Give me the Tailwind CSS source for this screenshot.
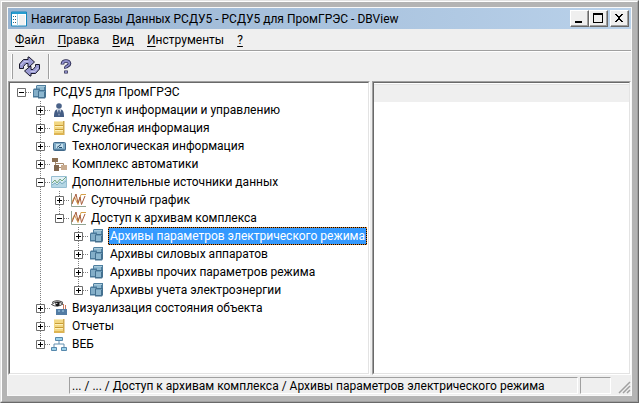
<!DOCTYPE html>
<html lang="ru">
<head>
<meta charset="utf-8">
<meta name="viewport" content="width=device-width, initial-scale=1">
<title>Навигатор Базы Данных РСДУ5</title>
<script src="https://cdn.jsdelivr.net/npm/@tailwindcss/browser@4"></script>
</head>
<body class="flex min-h-screen cursor-default flex-col border border-[#696969] border-t-[#e3e3e3] border-l-[#e3e3e3] bg-[#b4b4b4] font-['Roboto','Noto_Sans',sans-serif] text-[12px] leading-[18px] text-black">
<svg class="hidden" aria-hidden="true">
  <symbol id="db" viewBox="0 0 16 16">
    <path d="M4 2l1-1h9v7l-1 1H4z" fill="#4f7f9f"/>
    <path d="M5 3h7v5H5z" fill="#8fb9d0"/><path d="M5 2h8v1H5z" fill="#a9cadb"/>
    <path d="M1 5.500l1-1h6v9H1z" fill="#4b7a9b"/>
    <path d="M2 6h5v6H2z" fill="#83aec8"/>
    <path d="M6 7l1-1h7v7l-1 1.500H6z" fill="#44708f"/>
    <path d="M7 8h5v5H7z" fill="#8db7cf"/><path d="M7 7h6v1H7z" fill="#6a9ab8"/>
  </symbol>
  <symbol id="person" viewBox="0 0 16 16">
    <circle cx="8" cy="4" r="2.800" fill="#4a6288"/>
    <path d="M3 15c0-4 .5-7 3-7.500h4c2.500.5 3 3.500 3 7.500z" fill="#445d84"/>
    <path d="M5.800 7.500h4.400L8 14z" fill="#e8eef6"/><path d="M7.300 8h1.400l.5 3.500L8 13l-1.200-1.500z" fill="#536b91"/>
  </symbol>
  <symbol id="book" viewBox="0 0 16 16">
    <path d="M3 1h10v14H3z" fill="#f2d782"/><path d="M12 1h1.500v14H12z" fill="#d0a94e"/>
    <path d="M3 1h9v1H3z" fill="#f9eab4"/><path d="M4 5h8v1H4zM4 9h8v1H4z" fill="#c89d36"/>
    <path d="M4 6h8v1H4zM4 10h8v1H4z" fill="#fff2bd"/><path d="M3 13h10v2H3z" fill="#ddb452"/>
  </symbol>
  <symbol id="meter" viewBox="0 0 16 16">
    <rect x="2.500" y="4.500" width="12" height="8" rx="1" fill="#7fabc6" stroke="#41698a"/>
    <path d="M5 6h7v4H5z" fill="#c5dfed"/><path d="M6 9.500l4-3M8 9.500h3" stroke="#244d6e" fill="none"/><path d="M3 11h11v1H3z" fill="#55809f"/>
  </symbol>
  <symbol id="blocks" viewBox="0 0 16 16">
    <path d="M4.500 5v8M4.500 11.500H10M5 7.500h7.500V10" stroke="#a68b6e" fill="none"/>
    <path d="M1 2h6v4H1z" fill="#8b7053"/><path d="M3 9h5v6H3z" fill="#80674e"/><path d="M10 9h6v5h-6z" fill="#c8ab8f"/>
  </symbol>
  <symbol id="wave" viewBox="0 0 16 16">
    <path d="M.5 2.500h15v11H.5z" fill="#e2f0f6" stroke="#96bed2"/>
    <path d="M1 11 4 8l2 3 3-5 2 3 4-5v9H1z" fill="#b4d6e4"/>
    <path d="m1 9 3-3 2 3 3-4 2 2 4-4" fill="none" stroke="#71a67c"/><path d="m1 11 3-2 2 2 3-3 2 2 4-3" fill="none" stroke="#7fb0c2"/>
  </symbol>
  <symbol id="graph" viewBox="0 0 16 16">
    <path d="M1.500 1v13.500H16" fill="none" stroke="#93a593"/><path d="m2 10 2.500-5L8 12.500 11 2.500h5" fill="none" stroke="#d6a14b"/>
    <path d="m2 12 4-10L8 11l2-6 1.500 7.500L15 4" fill="none" stroke="#a75d3c"/>
  </symbol>
  <symbol id="eye" viewBox="0 0 16 16">
    <path d="M5 9h11v6H5z" fill="#537ca4"/><path d="M7 10h2v2H7zm4 0h2v2h-2z" fill="#7ea8c8"/><path d="M12.500 4v5M14.500 5v4" stroke="#c87a60"/>
    <path d="M.5 4.500Q6 0 12 4 6 8 .5 4.500z" fill="#fff" stroke="#454545"/><path d="M1 2.500Q6-1 12 2.500" stroke="#333" fill="none"/><circle cx="6.500" cy="4" r="2.200" fill="#161616"/><circle cx="5.800" cy="3.400" r=".6" fill="#fff"/>
  </symbol>
  <symbol id="net" viewBox="0 0 16 16">
    <path d="M8 5v3M3 11V8h10v3" stroke="#628faf" fill="none"/>
    <path d="M4.500 1.500h7v3h-7zM.5 11.500h5v3h-5zM10.500 11.500h5v3h-5z" fill="#9bd1ea" stroke="#5688ac"/>
  </symbol>
  <symbol id="plus" viewBox="0 0 9 9"><path d="M.5.500h8v8h-8z" fill="#fff" stroke="#6e6e6e"/><path d="M2 4h5v1H2zM4 2h1v5H4z"/></symbol>
  <symbol id="minus" viewBox="0 0 9 9"><path d="M.5.500h8v8h-8z" fill="#fff" stroke="#6e6e6e"/><path d="M2 4h5v1H2z"/></symbol>
</svg>

<div class="flex flex-1 flex-col border border-[#a0a0a0] border-t-white border-l-white p-[5px]">
<div class="flex flex-1 flex-col border border-[#f8f8f8] bg-[#efefef]">
  <header class="flex h-[21px] items-center bg-gradient-to-r from-[#99b4d1] to-[#b9d1ea] pr-[2px] pl-[3px]">
    <svg class="mr-1 h-4 w-4 shrink-0" viewBox="0 0 16 16" aria-hidden="true"><path d="M.5 1h15v14H.5z" fill="#fff" stroke="#1687bd"/><path d="M1 1h14v2H1z" fill="#269bce"/><path d="M6 3h1v12H6z" fill="#a8d3e7"/><path d="M2 5h1v1H2zm0 3h1v1H2zm0 3h1v1H2z" fill="#197ba9"/><path d="M4 5h1v1H4zm0 3h1v1H4zm0 3h1v1H4z" fill="#555"/><path d="M8 4h6v10H8z" fill="#f1f1f1"/></svg>
    <h1 class="flex-1 whitespace-nowrap">Навигатор Базы Данных РСДУ5 - РСДУ5 для ПромГРЭС - DBView</h1>
    <button aria-label="Свернуть" class="h-[17px] w-[19px] border border-[#696969] border-t-white border-l-white bg-[#efefef] shadow-[inset_-1px_-1px_#a0a0a0]"><svg class="h-[15px] w-[17px]" viewBox="0 0 17 15"><path d="M4 10h7v2H4z"/></svg></button>
    <button aria-label="Развернуть" class="h-[17px] w-[19px] border border-[#696969] border-t-white border-l-white bg-[#efefef] shadow-[inset_-1px_-1px_#a0a0a0]"><svg class="h-[15px] w-[17px]" viewBox="0 0 17 15"><path fill-rule="evenodd" d="M3 2h10v10H3zM4 4v7h8V4z"/></svg></button>
    <button aria-label="Закрыть" class="ml-[2px] h-[17px] w-[19px] border border-[#696969] border-t-white border-l-white bg-[#efefef] shadow-[inset_-1px_-1px_#a0a0a0]"><svg class="h-[15px] w-[17px]" viewBox="0 0 17 15"><path d="M4 3h2v1h1v1h2V4h1V3h2v1h-1v1h-1v1H9v2h1v1h1v1h1v1h-2v-1H9V9H7v1H6v1H4v-1h1V9h1V8h1V6H6V5H5V4H4z"/></svg></button>
  </header>
  <nav aria-label="Меню" class="flex h-[22px] items-center gap-[13px] border-b border-[#a0a0a0] pl-[7px]">
    <button><u class="underline-offset-2">Ф</u>айл</button>
    <button><u class="underline-offset-2">П</u>равка</button>
    <button><u class="underline-offset-2">В</u>ид</button>
    <button><u class="underline-offset-2">И</u>нструменты</button>
    <button><u class="underline-offset-2">?</u></button>
  </nav>
  <div role="toolbar" aria-label="Панель инструментов" class="flex h-[30px] items-center border-t border-white pl-[3px]">
    <div class="h-[25px] w-[2px] border-r border-[#a0a0a0] bg-white"></div>
    <button aria-label="Обновить" class="ml-[5px] h-[24px] w-[24px]"><svg class="h-6 w-6" viewBox="0 0 24 24" fill="#9a9ad2" stroke="#17172b" stroke-linejoin="miter"><path d="M1.500 13.500V9l4-4.500H10V2h1L16.500 7 11 12h-1V8.500H8L5.500 11.500v2z"/><path d="M21.500 9.500V14l-4 4.500H13V21h-1L6.500 16 12 11.500h1V14.500h2L17.500 11.500v-2z"/><path d="M3 10 6 6.500H10.500M20 13l-3 3.500H12.500" stroke="#c6c6ec" fill="none"/></svg></button>
    <div class="ml-[6px] h-[25px] w-[2px] border-l border-[#a0a0a0] bg-white"></div>
    <button aria-label="Справка" class="ml-[8px] h-4 w-4"><svg class="h-4 w-4" viewBox="0 0 16 16" fill="none"><path d="M4.500 5.500V4.500Q5 2 8 2t3.500 2.500q0 1.500-2 2.500T8 9.500M8 11.500v3" stroke="#28284f" stroke-width="3.600"/><path d="M4.500 5v-.5Q5 2 8 2t3.500 2.500q0 1.500-2 2.500T8 9M8 12v2" stroke="#8c8cc8" stroke-width="1.800"/></svg></button>
  </div>

  <main class="flex flex-1 gap-[2px]">
    <section aria-label="Дерево объектов" class="flex min-w-0 flex-[362] border border-white border-t-[#a0a0a0] border-l-[#a0a0a0]">
      <div class="min-w-0 flex-1 border border-[#e3e3e3] border-t-[#696969] border-l-[#696969] bg-white pl-[7px] whitespace-nowrap">
        <div class="flex h-[18px] items-center"><button aria-label="Свернуть ветвь" class="h-[9px] w-[9px]"><svg class="h-[9px] w-[9px]"><use href="#minus"/></svg></button><i class="h-px w-[6px] bg-[repeating-linear-gradient(90deg,#808080_0_1px,transparent_1px_2px)]"></i><svg class="mr-[5px] h-4 w-4 shrink-0"><use href="#db"/></svg><span>РСДУ5 для ПромГРЭС</span></div>
        <ul class="pl-[19px]">
          <li class="flex h-[18px] items-center"><span class="flex h-full items-center bg-[repeating-linear-gradient(#808080_0_1px,transparent_1px_2px)] bg-[length:1px_100%] bg-[position:4px_0] bg-no-repeat"><button aria-label="Развернуть ветвь" class="h-[9px] w-[9px]"><svg class="h-[9px] w-[9px]"><use href="#plus"/></svg></button></span><i class="h-px w-[6px] bg-[repeating-linear-gradient(90deg,#808080_0_1px,transparent_1px_2px)]"></i><svg class="mr-[5px] h-4 w-4 shrink-0"><use href="#person"/></svg><span>Доступ к информации и управлению</span></li>
          <li class="flex h-[18px] items-center"><span class="flex h-full items-center bg-[repeating-linear-gradient(#808080_0_1px,transparent_1px_2px)] bg-[length:1px_100%] bg-[position:4px_0] bg-no-repeat"><button aria-label="Развернуть ветвь" class="h-[9px] w-[9px]"><svg class="h-[9px] w-[9px]"><use href="#plus"/></svg></button></span><i class="h-px w-[6px] bg-[repeating-linear-gradient(90deg,#808080_0_1px,transparent_1px_2px)]"></i><svg class="mr-[5px] h-4 w-4 shrink-0"><use href="#book"/></svg><span>Служебная информация</span></li>
          <li class="flex h-[18px] items-center"><span class="flex h-full items-center bg-[repeating-linear-gradient(#808080_0_1px,transparent_1px_2px)] bg-[length:1px_100%] bg-[position:4px_0] bg-no-repeat"><button aria-label="Развернуть ветвь" class="h-[9px] w-[9px]"><svg class="h-[9px] w-[9px]"><use href="#plus"/></svg></button></span><i class="h-px w-[6px] bg-[repeating-linear-gradient(90deg,#808080_0_1px,transparent_1px_2px)]"></i><svg class="mr-[5px] h-4 w-4 shrink-0"><use href="#meter"/></svg><span>Технологическая информация</span></li>
          <li class="flex h-[18px] items-center"><span class="flex h-full items-center bg-[repeating-linear-gradient(#808080_0_1px,transparent_1px_2px)] bg-[length:1px_100%] bg-[position:4px_0] bg-no-repeat"><button aria-label="Развернуть ветвь" class="h-[9px] w-[9px]"><svg class="h-[9px] w-[9px]"><use href="#plus"/></svg></button></span><i class="h-px w-[6px] bg-[repeating-linear-gradient(90deg,#808080_0_1px,transparent_1px_2px)]"></i><svg class="mr-[5px] h-4 w-4 shrink-0"><use href="#blocks"/></svg><span>Комплекс автоматики</span></li>
          <li class="bg-[repeating-linear-gradient(#808080_0_1px,transparent_1px_2px)] bg-[length:1px_100%] bg-[position:4px_0] bg-no-repeat">
            <div class="flex h-[18px] items-center"><button aria-label="Свернуть ветвь" class="h-[9px] w-[9px]"><svg class="h-[9px] w-[9px]"><use href="#minus"/></svg></button><i class="h-px w-[6px] bg-[repeating-linear-gradient(90deg,#808080_0_1px,transparent_1px_2px)]"></i><svg class="mr-[5px] h-4 w-4 shrink-0"><use href="#wave"/></svg><span>Дополнительные источники данных</span></div>
            <ul class="pl-[19px]">
              <li class="flex h-[18px] items-center"><span class="flex h-full items-center bg-[repeating-linear-gradient(#808080_0_1px,transparent_1px_2px)] bg-[length:1px_100%] bg-[position:4px_0] bg-no-repeat"><button aria-label="Развернуть ветвь" class="h-[9px] w-[9px]"><svg class="h-[9px] w-[9px]"><use href="#plus"/></svg></button></span><i class="h-px w-[6px] bg-[repeating-linear-gradient(90deg,#808080_0_1px,transparent_1px_2px)]"></i><svg class="mr-[5px] h-4 w-4 shrink-0"><use href="#graph"/></svg><span>Суточный график</span></li>
              <li>
                <div class="flex h-[18px] items-center"><span class="flex h-full items-center bg-[repeating-linear-gradient(#808080_0_1px,transparent_1px_2px)] bg-[length:1px_9px] bg-[position:4px_0] bg-no-repeat"><button aria-label="Свернуть ветвь" class="h-[9px] w-[9px]"><svg class="h-[9px] w-[9px]"><use href="#minus"/></svg></button></span><i class="h-px w-[6px] bg-[repeating-linear-gradient(90deg,#808080_0_1px,transparent_1px_2px)]"></i><svg class="mr-[5px] h-4 w-4 shrink-0"><use href="#graph"/></svg><span>Доступ к архивам комплекса</span></div>
                <ul class="pl-[19px]">
                  <li class="flex h-[18px] items-center"><span class="flex h-full items-center bg-[repeating-linear-gradient(#808080_0_1px,transparent_1px_2px)] bg-[length:1px_100%] bg-[position:4px_0] bg-no-repeat"><button aria-label="Развернуть ветвь" class="h-[9px] w-[9px]"><svg class="h-[9px] w-[9px]"><use href="#plus"/></svg></button></span><i class="h-px w-[6px] bg-[repeating-linear-gradient(90deg,#808080_0_1px,transparent_1px_2px)]"></i><svg class="mr-[3px] h-4 w-4 shrink-0"><use href="#db"/></svg><span aria-selected="true" class="border border-dotted border-[#d9822b] bg-black"><span class="block bg-[#3399ff] px-px leading-[16px] text-white">Архивы параметров электрического режима</span></span></li>
                  <li class="flex h-[18px] items-center"><span class="flex h-full items-center bg-[repeating-linear-gradient(#808080_0_1px,transparent_1px_2px)] bg-[length:1px_100%] bg-[position:4px_0] bg-no-repeat"><button aria-label="Развернуть ветвь" class="h-[9px] w-[9px]"><svg class="h-[9px] w-[9px]"><use href="#plus"/></svg></button></span><i class="h-px w-[6px] bg-[repeating-linear-gradient(90deg,#808080_0_1px,transparent_1px_2px)]"></i><svg class="mr-[5px] h-4 w-4 shrink-0"><use href="#db"/></svg><span>Архивы силовых аппаратов</span></li>
                  <li class="flex h-[18px] items-center"><span class="flex h-full items-center bg-[repeating-linear-gradient(#808080_0_1px,transparent_1px_2px)] bg-[length:1px_100%] bg-[position:4px_0] bg-no-repeat"><button aria-label="Развернуть ветвь" class="h-[9px] w-[9px]"><svg class="h-[9px] w-[9px]"><use href="#plus"/></svg></button></span><i class="h-px w-[6px] bg-[repeating-linear-gradient(90deg,#808080_0_1px,transparent_1px_2px)]"></i><svg class="mr-[5px] h-4 w-4 shrink-0"><use href="#db"/></svg><span>Архивы прочих параметров режима</span></li>
                  <li class="flex h-[18px] items-center"><span class="flex h-full items-center bg-[repeating-linear-gradient(#808080_0_1px,transparent_1px_2px)] bg-[length:1px_9px] bg-[position:4px_0] bg-no-repeat"><button aria-label="Развернуть ветвь" class="h-[9px] w-[9px]"><svg class="h-[9px] w-[9px]"><use href="#plus"/></svg></button></span><i class="h-px w-[6px] bg-[repeating-linear-gradient(90deg,#808080_0_1px,transparent_1px_2px)]"></i><svg class="mr-[5px] h-4 w-4 shrink-0"><use href="#db"/></svg><span>Архивы учета электроэнергии</span></li>
                </ul>
              </li>
            </ul>
          </li>
          <li class="flex h-[18px] items-center"><span class="flex h-full items-center bg-[repeating-linear-gradient(#808080_0_1px,transparent_1px_2px)] bg-[length:1px_100%] bg-[position:4px_0] bg-no-repeat"><button aria-label="Развернуть ветвь" class="h-[9px] w-[9px]"><svg class="h-[9px] w-[9px]"><use href="#plus"/></svg></button></span><i class="h-px w-[6px] bg-[repeating-linear-gradient(90deg,#808080_0_1px,transparent_1px_2px)]"></i><svg class="mr-[5px] h-4 w-4 shrink-0"><use href="#eye"/></svg><span>Визуализация состояния объекта</span></li>
          <li class="flex h-[18px] items-center"><span class="flex h-full items-center bg-[repeating-linear-gradient(#808080_0_1px,transparent_1px_2px)] bg-[length:1px_100%] bg-[position:4px_0] bg-no-repeat"><button aria-label="Развернуть ветвь" class="h-[9px] w-[9px]"><svg class="h-[9px] w-[9px]"><use href="#plus"/></svg></button></span><i class="h-px w-[6px] bg-[repeating-linear-gradient(90deg,#808080_0_1px,transparent_1px_2px)]"></i><svg class="mr-[5px] h-4 w-4 shrink-0"><use href="#book"/></svg><span>Отчеты</span></li>
          <li class="flex h-[18px] items-center"><span class="flex h-full items-center bg-[repeating-linear-gradient(#808080_0_1px,transparent_1px_2px)] bg-[length:1px_9px] bg-[position:4px_0] bg-no-repeat"><button aria-label="Развернуть ветвь" class="h-[9px] w-[9px]"><svg class="h-[9px] w-[9px]"><use href="#plus"/></svg></button></span><i class="h-px w-[6px] bg-[repeating-linear-gradient(90deg,#808080_0_1px,transparent_1px_2px)]"></i><svg class="mr-[5px] h-4 w-4 shrink-0"><use href="#net"/></svg><span>ВЕБ</span></li>
        </ul>
      </div>
    </section>
    <section aria-label="Содержимое" class="flex min-w-0 flex-[258] border border-white border-t-[#a0a0a0] border-l-[#a0a0a0]">
      <div class="flex-1 border border-[#e3e3e3] border-t-[#696969] border-l-[#696969] bg-white">
        <div class="h-[19px] border-t border-white bg-[#efefef]"><div class="h-px bg-[#e3e3e3]"></div></div>
      </div>
    </section>
  </main>

  <footer class="flex h-[20px] items-stretch gap-[2px] pt-[2px] pb-px pl-[61px]">
    <div role="status" class="flex min-w-0 flex-1 items-center border border-white border-t-[#a0a0a0] border-l-[#a0a0a0] pl-[2px] whitespace-nowrap">... / ... / Доступ к архивам комплекса / Архивы параметров электрического режима</div>
    <div class="w-[31px] border border-white border-t-[#a0a0a0] border-l-[#a0a0a0]"></div>
    <svg class="ml-[5px] h-[13px] w-[13px] self-end" viewBox="0 0 13 13" aria-hidden="true"><path d="M1 12 12 1M5 12l7-7M9 12l3-3" stroke="#a0a0a0" stroke-width="1.500"/></svg>
  </footer>
</div>
</div>
</body>
</html>
